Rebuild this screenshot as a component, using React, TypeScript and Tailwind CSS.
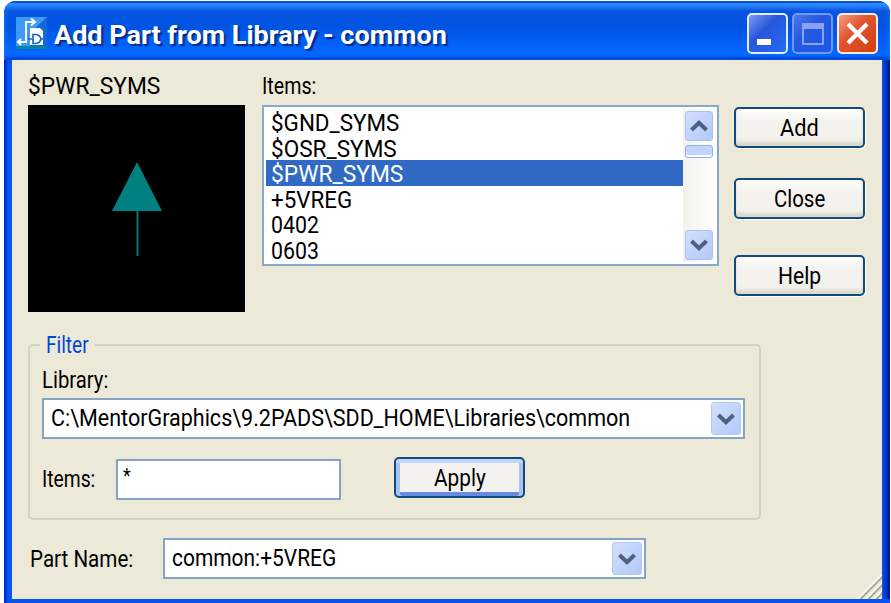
import { useLayoutEffect, useRef, useState } from "react";
import type { ReactNode } from "react";

// Single line of text condensed or widened to the given width.
function Fit({ w, children, className = "" }: { w: number; children: ReactNode; className?: string }) {
  const ref = useRef<HTMLSpanElement>(null);
  const [k, setK] = useState(1);
  useLayoutEffect(() => {
    if (ref.current) setK(w / ref.current.offsetWidth);
  }, [w]);
  return (
    <span className="block h-[26px]" style={{ width: w }}>
      <span
        ref={ref}
        className={`inline-block origin-left whitespace-nowrap leading-[26px] ${className}`}
        style={{ transform: `scaleX(${k})` }}
      >
        {children}
      </span>
    </span>
  );
}

function Chevron({ up = false }: { up?: boolean }) {
  return (
    <svg width="18" height="12" viewBox="0 0 18 12" className={up ? "rotate-180" : ""}>
      <path d="M1.5 2 L9 9.2 L16.5 2" fill="none" stroke="#4d6185" strokeWidth="4" />
    </svg>
  );
}

function PushButton({ label, w, primary = false }: { label: string; w: number; primary?: boolean }) {
  return (
    <button
      className={`flex h-[41px] w-[131px] items-center justify-center rounded-[5px] border-2 border-[#124a7c] ${
        primary
          ? "bg-[#f4f2ee] shadow-[inset_0_4px_0_#c2d5fb,inset_4px_0_0_#a8c2f5,inset_-4px_0_0_#a8c2f5,inset_0_-4px_0_#668be0]"
          : "bg-linear-to-b from-white via-[#f4f3ef] via-30% to-[#f1f0ea] shadow-[inset_0_-4px_3px_#dcd8cc,1px_1px_1px_#ffffff]"
      }`}
    >
      <Fit w={w}>{label}</Fit>
    </button>
  );
}

function Combo({ text, w, className }: { text: string; w: number; className: string }) {
  return (
    <div className={`flex h-[41px] items-start justify-between border-2 border-[#84a4c6] bg-white pt-0.5 pr-0.5 pl-[7px] ${className}`}>
      <div className="pt-[3px]">
        <Fit w={w}>{text}</Fit>
      </div>
      <div className="flex h-[33px] w-[30px] items-center justify-center rounded-[3px] border border-[#b4c8f6] bg-linear-to-br from-[#d3e0fd] to-[#b2c8f8]">
        <Chevron />
      </div>
    </div>
  );
}

const items = [
  { text: "$GND_SYMS", w: 128 },
  { text: "$OSR_SYMS", w: 126 },
  { text: "$PWR_SYMS", w: 132, selected: true },
  { text: "+5VREG", w: 81 },
  { text: "0402", w: 48 },
  { text: "0603", w: 48 },
];

function TitleBar() {
  return (
    <header className="flex h-[59px] items-start bg-linear-to-b from-[#0b53df] from-0% via-[#0054e3] via-45% to-[#0366fe] to-85% pl-3 text-white shadow-[inset_0_2px_0_#0a50d8,inset_0_7px_4px_#2e8bff,inset_0_-3px_2px_#0048d8]">
      <svg width="31" height="32" viewBox="0 0 31 32" className="mt-4">
        <rect width="31" height="32" fill="#1468d8" />
        <path d="M0 0H31L14 16V29H0Z" fill="#3c9afa" />
        <path d="M1 29H30V32H1Z" fill="#08879a" />
        <path d="M10 25V5H18M2 25H11M15 1.5L19 5L15 8.5M5 22L2 25L5 28" fill="none" stroke="#fff" strokeWidth="2" />
        <path d="M14 11H24L27 14V28H14Z" fill="#fff" />
        <path d="M12 22H17M17 17.500H20Q24 18 25 22Q24 26 20 26.500H17ZM25 22H29" fill="none" stroke="#1967c8" strokeWidth="1.7" />
      </svg>
      <div className="mt-[22px] ml-[7px] text-[25px] font-bold [text-shadow:2px_2px_1px_#0a2a8c]">
        <Fit w={393}>Add Part from Library - common</Fit>
      </div>
      <div className="mt-3 mr-3 ml-auto flex gap-1">
        <div className="flex h-[41px] w-[41px] rounded-[5px] border-2 border-[#e4ecff] bg-linear-to-br from-[#7b9bf3] via-[#2956db] via-40% to-[#1f6cf4] pt-6 pl-2">
          <div className="h-1.5 w-3.5 bg-white" />
        </div>
        <div className="flex h-[41px] w-[41px] items-center justify-center rounded-[5px] border-2 border-[#6f98f2] bg-linear-to-br from-[#4b78eb] via-[#2458e0] via-40% to-[#1858e8]">
          <div className="h-[22px] w-[22px] border-2 border-t-[6px] border-[#8ba0ee]" />
        </div>
        <div className="flex h-[41px] w-[41px] items-center justify-center rounded-[5px] border-2 border-[#ffeae4] bg-linear-to-br from-[#f09b82] via-[#e2552f] via-40% to-[#d13f0c]">
          <svg width="23" height="23" viewBox="0 0 23 23">
            <path d="M2 2L21 21M21 2L2 21" stroke="#fff" strokeWidth="4.2" />
          </svg>
        </div>
      </div>
    </header>
  );
}

export default function App() {
  return (
    <div className="h-[603px] w-[891px] overflow-hidden bg-white pt-px pl-1 font-[Roboto,'Liberation_Sans',sans-serif] text-[24px] leading-[26px] text-black">
      <div className="flex h-[602px] w-[886px] flex-col overflow-hidden rounded-t-[12px] bg-[#0050e8]">
        <TitleBar />
        <div className="flex min-h-0 grow bg-linear-to-r from-[#0019cf] from-0% via-[#0855ee] via-[4px] to-[#0855ee] pb-1 pl-2">
          <main className="flex w-[870px] shrink-0 flex-col bg-[#ece9d8] pl-4">
            <section className="flex h-[268px]">
              <div className="w-[234px] pt-[13px]">
                <Fit w={132}>$PWR_SYMS</Fit>
                <svg width="217" height="207" viewBox="0 0 217 207" className="mt-[6px]">
                  <rect width="217" height="207" />
                  <path d="M109 57L134 106H84Z" fill="#008080" />
                  <path d="M109.500 106V151" stroke="#007474" strokeWidth="2" />
                </svg>
              </div>
              <div className="w-[472px] pt-[13px]">
                <Fit w={54}>Items:</Fit>
                <div className="mt-[6px] flex h-[161px] w-[457px] border-2 border-[#8aa9c8] bg-white p-0.5">
                  <div className="grow">
                    {items.map((it) => (
                      <div
                        key={it.text}
                        className={`h-[25.5px] pt-px pl-[5px] ${it.selected ? "bg-[#316ac5] text-white" : ""}`}
                      >
                        <Fit w={it.w}>{it.text}</Fit>
                      </div>
                    ))}
                  </div>
                  <div className="flex w-8 flex-col items-center bg-linear-to-r from-[#f2f1ec] to-white pt-0.5">
                    <div className="flex h-[30px] w-7 items-center justify-center rounded-[3px] border border-[#a8bff0] bg-linear-to-br from-[#d3e0fd] to-[#b2c8f8]">
                      <Chevron up />
                    </div>
                    <div className="mt-1 h-[13px] w-7 rounded-[3px] border border-[#94aee4] bg-[#c3d4fc] shadow-[inset_0_-2px_0_#ffffff]" />
                    <div className="mt-auto mb-0.5 flex h-[30px] w-7 items-center justify-center rounded-[3px] border border-[#a8bff0] bg-linear-to-br from-[#d3e0fd] to-[#b2c8f8]">
                      <Chevron />
                    </div>
                  </div>
                </div>
              </div>
              <div className="flex flex-col pt-[47px]">
                <PushButton label="Add" w={39} />
                <div className="mt-[30px]">
                  <PushButton label="Close" w={51} />
                </div>
                <div className="mt-[36px]">
                  <PushButton label="Help" w={43} />
                </div>
              </div>
            </section>

            <fieldset className="mt-[4px] h-[188px] w-[733px] rounded-[5px] border-2 border-[#d3d2bf] pl-3">
              <legend className="-ml-0.5 px-[6px] text-[#0046d5]">
                <Fit w={43}>Filter</Fit>
              </legend>
              <div className="mt-[9px]">
                <Fit w={66}>Library:</Fit>
              </div>
              <Combo text="C:\MentorGraphics\9.2PADS\SDD_HOME\Libraries\common" w={579} className="mt-[5px] w-[703px]" />
              <div className="mt-5 flex">
                <div className="w-[74px] pt-[7px]">
                  <Fit w={53}>Items:</Fit>
                </div>
                <div className="h-[41px] w-[225px] border-2 border-[#84a4c6] bg-white pt-px pl-[5px]">
                  <Fit w={8} className="text-[20px]">*</Fit>
                </div>
                <div className="-mt-0.5 ml-[53px]">
                  <PushButton label="Apply" w={52} primary />
                </div>
              </div>
            </fieldset>

            <section className="mt-[18px] flex grow">
              <div className="w-[135px] pt-[8px] pl-0.5">
                <Fit w={103}>Part Name:</Fit>
              </div>
              <Combo text="common:+5VREG" w={164} className="w-[483px]" />
              <svg width="24" height="24" viewBox="0 0 24 24" className="mt-auto ml-auto">
                <path d="M2 24L24 2M10 24L24 10M18 24L24 18" stroke="#a9a696" strokeWidth="2.5" />
                <path d="M0 24L24 0M8 24L24 8M16 24L24 16" stroke="#fff" strokeWidth="1.5" />
              </svg>
            </section>
          </main>
          <div className="grow bg-linear-to-r from-[#0855ee] to-[#00138c]" />
        </div>
      </div>
    </div>
  );
}
